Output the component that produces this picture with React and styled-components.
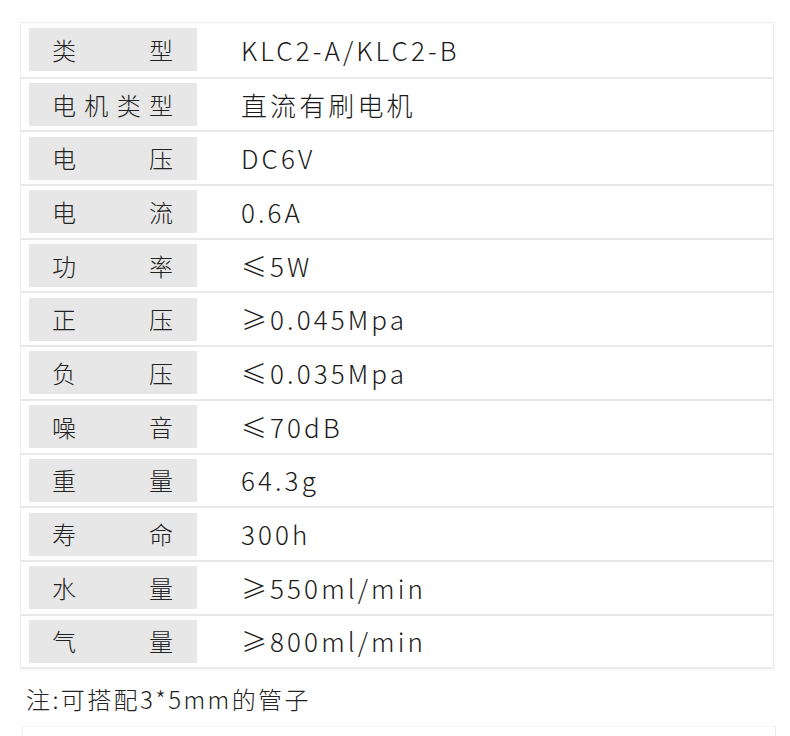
import React from "react";
import styled, { createGlobalStyle } from "styled-components";

const GlobalStyle = createGlobalStyle`
  body {
    margin: 0;
    background: #fff;
    font-family: "Noto Sans CJK SC", "Noto Sans", sans-serif;
    color: #222;
  }
`;

const specs = [
  ["类型", "KLC2-A/KLC2-B"],
  ["电机类型", "直流有刷电机"],
  ["电压", "DC6V"],
  ["电流", "0.6A"],
  ["功率", "≤5W"],
  ["正压", "≥0.045Mpa"],
  ["负压", "≤0.035Mpa"],
  ["噪音", "≤70dB"],
  ["重量", "64.3g"],
  ["寿命", "300h"],
  ["水量", "≥550ml/min"],
  ["气量", "≥800ml/min"],
];

const Page = styled.div`
  width: 790px;
  height: 736px;
  overflow: hidden;
  padding: 22px 0 0 20px;
  box-sizing: border-box;
`;

const Table = styled.div`
  width: 754px;
  border: 1px solid #ececec;
  border-bottom-width: 2px;
  box-shadow: 1px 1px 2px rgba(0, 0, 0, 0.04);
  box-sizing: border-box;
`;

const Row = styled.div`
  display: grid;
  grid-template-columns: 176px 1fr;
  align-items: center;
  height: 53.7px;
  box-sizing: border-box;
  border-top: ${(p) => (p.$first ? "none" : "2px solid #e8e8e8")};
`;

const Label = styled.div`
  margin-left: 8px;
  height: 43px;
  background: #e7e7e7;
  display: flex;
  justify-content: space-between;
  align-items: center;
  padding: 0 24px 0 23px;
  font-size: 24px;
  font-weight: 300;
  color: #222;
  line-height: 1;
`;

const Value = styled.div`
  padding-left: 44px;
  font-size: 26px;
  letter-spacing: 3.1px;
  color: #1a1a1a;
  line-height: 1;
  font-weight: 300;
`;

const Note = styled.div`
  margin: 12px 0 0 6px;
  font-size: 24px;
  letter-spacing: 2.4px;
  color: #222;
  font-weight: 300;
`;

const NextBox = styled.div`
  margin-top: 10px;
  margin-left: 2px;
  width: 752px;
  height: 60px;
  border-left: 1px solid #eeeeee;
  border-right: 1px solid #eeeeee;
  border-top: 1px solid #f4f4f4;
`;

export default function App() {
  return (
    <>
      <GlobalStyle />
      <Page>
        <Table>
          {specs.map(([k, v], i) => (
            <Row key={k} $first={i === 0}>
              <Label>
                {k.split("").map((c, j) => (
                  <span key={j}>{c}</span>
                ))}
              </Label>
              <Value>{v}</Value>
            </Row>
          ))}
        </Table>
        <Note>注:可搭配3*5mm的管子</Note>
        <NextBox />
      </Page>
    </>
  );
}
